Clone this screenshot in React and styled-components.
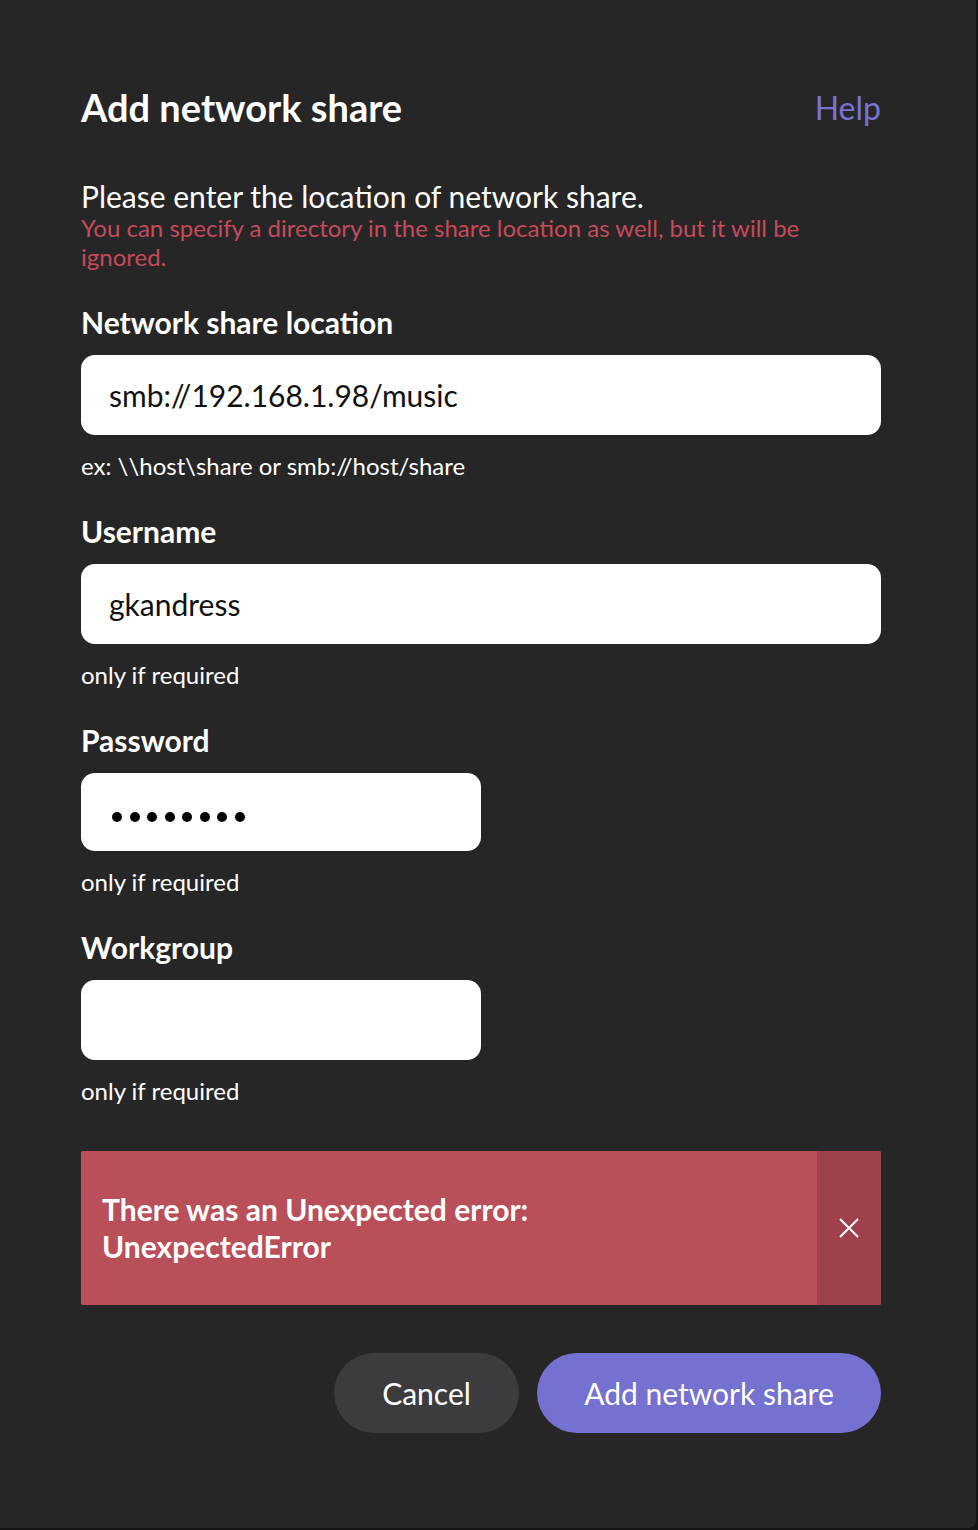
import React from "react";
import styled, { createGlobalStyle } from "styled-components";

const Global = createGlobalStyle`
  html, body { margin: 0; padding: 0; background: #141414; }
  body { font-family: Lato, "Open Sans", sans-serif; }
  * { box-sizing: border-box; }
`;

const Dialog = styled.div`
  width: 976px;
  height: 1528px;
  background: #262626;
  border-bottom-right-radius: 8px;
  padding: 86px 95px 0 81px;
  color: #fff;
`;

const Header = styled.div`
  display: flex;
  justify-content: space-between;
  align-items: center;
`;

const Title = styled.h1`
  margin: 0;
  font-size: 38px;
  line-height: 43px;
  font-weight: 700;
`;

const HelpLink = styled.a`
  font-size: 32px;
  color: #7874d6;
  text-decoration: none;
  line-height: 43px;
`;

const Intro = styled.p`
  margin: 50px 0 0;
  font-size: 30px;
  line-height: 34px;
`;

const Warning = styled.p`
  margin: 0;
  font-size: 24px;
  line-height: 29px;
  color: #c64a5a;
  max-width: 740px;
`;

const Field = styled.div`
  display: flex;
  flex-direction: column;
  margin-top: ${(p) => p.$top}px;
`;

const Label = styled.label`
  font-size: 30px;
  line-height: 34px;
  font-weight: 700;
  margin-bottom: 16px;
`;

const Input = styled.div`
  width: ${(p) => (p.$narrow ? "400px" : "800px")};
  height: ${(p) => p.$h || 80}px;
  background: #fff;
  border-radius: 14px;
  padding: 0 28px;
  display: flex;
  align-items: center;
  color: #111;
  font-size: 30px;
`;

const Dots = styled.div`
  display: flex;
  gap: 7.5px;
  padding-left: 3px;
  margin-top: 9px;
`;

const Dot = styled.span`
  width: 10px;
  height: 10px;
  border-radius: 50%;
  background: #000;
`;

const Hint = styled.div`
  margin-top: 16px;
  font-size: 24px;
  line-height: 29px;
`;

const ErrorBox = styled.div`
  margin-top: 46px;
  width: 800px;
  height: 154px;
  display: flex;
  background: #b84f59;
  border-radius: 2px;
  overflow: hidden;
`;

const ErrorText = styled.div`
  flex: 1;
  display: flex;
  align-items: center;
  padding-left: 21px;
  font-size: 30px;
  line-height: 37px;
  font-weight: 700;
`;

const CloseCol = styled.button`
  width: 64px;
  border: none;
  background: #9e414b;
  display: flex;
  align-items: center;
  justify-content: center;
  padding: 0;
  cursor: pointer;
`;

const Actions = styled.div`
  margin-top: 48px;
  display: flex;
  justify-content: flex-end;
  gap: 18px;
`;

const Button = styled.button`
  height: 80px;
  width: ${(p) => p.$w}px;
  border: none;
  border-radius: 40px;
  background: ${(p) => (p.$primary ? "#7471d0" : "#3c3c3e")};
  color: #fff;
  font-family: Lato, sans-serif;
  font-size: 30px;
  cursor: pointer;
`;

export default function App() {
  return (
    <>
      <Global />
      <Dialog>
        <Header>
          <Title>Add network share</Title>
          <HelpLink href="#">Help</HelpLink>
        </Header>
        <Intro>Please enter the location of network share.</Intro>
        <Warning>
          You can specify a directory in the share location as well, but it will be ignored.
        </Warning>
        <Field $top={34}>
          <Label>Network share location</Label>
          <Input>smb://192.168.1.98/music</Input>
          <Hint>ex: \\host\share or smb://host/share</Hint>
        </Field>
        <Field $top={34}>
          <Label>Username</Label>
          <Input>gkandress</Input>
          <Hint>only if required</Hint>
        </Field>
        <Field $top={34}>
          <Label>Password</Label>
          <Input $narrow $h={78}>
            <Dots>
              {Array.from({ length: 8 }).map((_, i) => (
                <Dot key={i} />
              ))}
            </Dots>
          </Input>
          <Hint>only if required</Hint>
        </Field>
        <Field $top={34}>
          <Label>Workgroup</Label>
          <Input $narrow />
          <Hint>only if required</Hint>
        </Field>
        <ErrorBox>
          <ErrorText>
            There was an Unexpected error:
            <br />
            UnexpectedError
          </ErrorText>
          <CloseCol aria-label="Close">
            <svg width="22" height="22" viewBox="0 0 22 22">
              <path d="M2 2L20 20M20 2L2 20" stroke="#fff" strokeWidth="2" />
            </svg>
          </CloseCol>
        </ErrorBox>
        <Actions>
          <Button $w={185}>Cancel</Button>
          <Button $w={344} $primary>Add network share</Button>
        </Actions>
      </Dialog>
    </>
  );
}
